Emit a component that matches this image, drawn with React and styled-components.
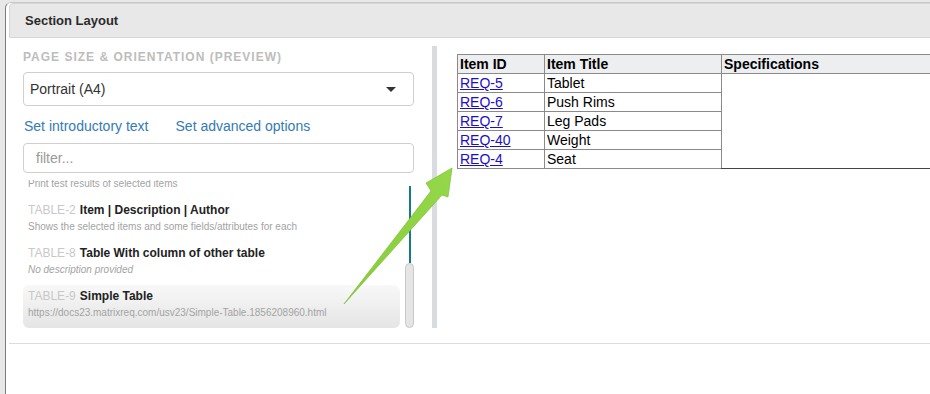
import { useLayoutEffect, useRef } from "react";
import styled, { createGlobalStyle } from "styled-components";

const GlobalStyle = createGlobalStyle`
  html, body {
    margin: 0;
    padding: 0;
    background: #e8e8e8;
    font-family: "Liberation Sans", Arial, sans-serif;
    overflow: hidden;
  }
`;

const Page = styled.div`
  position: relative;
  width: 930px;
  height: 394px;
  overflow: hidden;
`;

const Dialog = styled.div`
  margin: 2px 0 0 5px;
  width: 1000px;
  height: 392px;
  background: #fff;
  border-left: 1px solid #7d7d7d;
  border-top: 1px solid #c8c8c8;
  border-top-left-radius: 6px;
  padding-left: 3px;
  box-sizing: border-box;
`;

const Panel = styled.section`
  border-bottom: 1px solid #dcdcdc;
`;

const PanelHeader = styled.div`
  height: 35px;
  box-sizing: border-box;
  background: #e8e8e8;
  border: 1px solid #d6d6d6;
  border-radius: 4px 4px 0 0;
  padding-left: 15px;
  display: flex;
  align-items: center;
  font-size: 13px;
  font-weight: bold;
  color: #2b2b2b;
`;

const PanelBody = styled.div`
  display: flex;
  height: 305px;
`;

const LeftColumn = styled.div`
  flex: none;
  width: 423px;
  box-sizing: border-box;
  padding: 10px 18px 0 14px;
  display: flex;
  flex-direction: column;
`;

const SectionLabel = styled.div`
  font-size: 12px;
  font-weight: bold;
  letter-spacing: 1px;
  line-height: 18px;
  color: #bdbdbd;
`;

const Select = styled.div`
  margin-top: 6px;
  height: 34px;
  box-sizing: border-box;
  border: 1px solid #cfcfcf;
  border-radius: 4px;
  padding: 0 17px 0 6px;
  display: flex;
  align-items: center;
  justify-content: space-between;
  font-size: 14px;
  color: #333;
`;

const Caret = styled.span`
  width: 0;
  height: 0;
  border-left: 5px solid transparent;
  border-right: 5px solid transparent;
  border-top: 5px solid #333;
`;

const LinkRow = styled.div`
  margin-top: 10px;
  display: flex;
  gap: 27px;
  padding-left: 1px;
  line-height: 20px;
  font-size: 14px;
`;

const ActionLink = styled.a`
  color: #337ab7;
  text-decoration: none;
`;

const FilterInput = styled.input`
  margin-top: 7px;
  height: 30px;
  box-sizing: border-box;
  border: 1px solid #cfcfcf;
  border-radius: 4px;
  padding: 0 12px;
  font-family: inherit;
  font-size: 14px;
  outline: none;
  &::placeholder {
    color: #9a9a9a;
  }
`;

const ListRow = styled.div`
  margin-top: 7px;
  height: 148px;
  display: flex;
  gap: 5px;
`;

const ItemList = styled.div`
  flex: 1;
  overflow: hidden;
`;

const Item = styled.div`
  padding: 3px 5px 7px;
  border-radius: 6px;
  background: ${(p) =>
    p.$selected ? "linear-gradient(#f8f8f8, #e5e5e5)" : "transparent"};
`;

const ItemTitle = styled.div`
  font-size: 12px;
  line-height: 17px;
  font-weight: bold;
  color: #222;
  white-space: nowrap;
`;

const ItemKey = styled.span`
  font-weight: normal;
  color: #c8c8c8;
  margin-right: 4px;
`;

const ItemDesc = styled.div`
  font-size: 10px;
  line-height: 16px;
  color: #a3a3a3;
  font-style: ${(p) => (p.$empty ? "italic" : "normal")};
  white-space: nowrap;
`;

const Scrollbar = styled.div`
  flex: none;
  width: 9px;
  padding-top: 6px;
  display: flex;
  flex-direction: column;
  align-items: center;
`;

const Track = styled.div`
  flex: 1;
  width: 2px;
  background: #157b88;
`;

const Thumb = styled.div`
  flex: none;
  width: 9px;
  height: 65px;
  box-sizing: border-box;
  background: #e5e5e5;
  border: 1px solid #c9c9c9;
  border-radius: 5px;
`;

const Divider = styled.div`
  flex: none;
  width: 5px;
  margin: 8px 0 15px;
  background: #d8dce0;
`;

const RightColumn = styled.div`
  flex: 1;
  padding: 16px 0 0 20px;
`;

const PreviewTable = styled.table`
  border-collapse: collapse;
  font-size: 14px;
  color: #000;
  width: 560px;
`;

const Th = styled.th`
  text-align: left;
  background: #eceeef;
  border: 1px solid #8a8a8a;
  padding: 0 2px;
  line-height: 18px;
  width: ${(p) => p.$w || "auto"};
`;

const Td = styled.td`
  border: 1px solid #8a8a8a;
  border-bottom-color: ${(p) => (p.$span ? "#444" : "#8a8a8a")};
  padding: 0 2px;
  line-height: 18px;
  vertical-align: top;
`;

const ReqLink = styled.a`
  color: #1a0dcc;
  text-decoration: underline;
`;

const Annotation = styled.svg`
  position: absolute;
  left: 0;
  top: 0;
  pointer-events: none;
`;

const items = [
  { key: "TABLE-1", title: "Test Results", desc: "Print test results of selected items" },
  { key: "TABLE-2", title: "Item | Description | Author", desc: "Shows the selected items and some fields/attributes for each" },
  { key: "TABLE-8", title: "Table With column of other table", desc: "No description provided", empty: true },
  { key: "TABLE-9", title: "Simple Table", desc: "https://docs23.matrixreq.com/usv23/Simple-Table.1856208960.html", selected: true },
];

const rows = [
  ["REQ-5", "Tablet"],
  ["REQ-6", "Push Rims"],
  ["REQ-7", "Leg Pads"],
  ["REQ-40", "Weight"],
  ["REQ-4", "Seat"],
];

const App = () => {
  const listRef = useRef(null);
  useLayoutEffect(() => {
    if (listRef.current) listRef.current.scrollTop = 24;
  }, []);

  return (
    <Page>
      <GlobalStyle />
      <Dialog>
        <Panel>
          <PanelHeader>Section Layout</PanelHeader>
          <PanelBody>
            <LeftColumn>
              <SectionLabel>PAGE SIZE &amp; ORIENTATION (PREVIEW)</SectionLabel>
              <Select>
                Portrait (A4)
                <Caret />
              </Select>
              <LinkRow>
                <ActionLink href="#">Set introductory text</ActionLink>
                <ActionLink href="#">Set advanced options</ActionLink>
              </LinkRow>
              <FilterInput placeholder="filter..." />
              <ListRow>
                <ItemList ref={listRef}>
                  {items.map((it) => (
                    <Item key={it.key} $selected={it.selected}>
                      <ItemTitle>
                        <ItemKey>{it.key}</ItemKey>
                        {it.title}
                      </ItemTitle>
                      <ItemDesc $empty={it.empty}>{it.desc}</ItemDesc>
                    </Item>
                  ))}
                </ItemList>
                <Scrollbar>
                  <Track />
                  <Thumb />
                </Scrollbar>
              </ListRow>
            </LeftColumn>
            <Divider />
            <RightColumn>
              <PreviewTable>
                <thead>
                  <tr>
                    <Th $w="82px">Item ID</Th>
                    <Th $w="172px">Item Title</Th>
                    <Th>Specifications</Th>
                  </tr>
                </thead>
                <tbody>
                  {rows.map(([id, title], i) => (
                    <tr key={id}>
                      <Td>
                        <ReqLink href="#">{id}</ReqLink>
                      </Td>
                      <Td>{title}</Td>
                      {i === 0 && <Td rowSpan={rows.length} $span />}
                    </tr>
                  ))}
                </tbody>
              </PreviewTable>
            </RightColumn>
          </PanelBody>
        </Panel>
      </Dialog>
      <Annotation width="930" height="394" viewBox="0 0 930 394">
        <defs>
          <linearGradient id="arrowFill" x1="0" y1="1" x2="1" y2="0">
            <stop offset="0" stopColor="#86cc3a" />
            <stop offset="1" stopColor="#95d84a" />
          </linearGradient>
        </defs>
        <polygon
          points="344,304 431,191 426,183 452,168 448,197 442,195"
          fill="url(#arrowFill)"
          stroke="#7cbf34"
          strokeWidth="0.7"
          strokeLinejoin="round"
        />
      </Annotation>
    </Page>
  );
};

export default App;
